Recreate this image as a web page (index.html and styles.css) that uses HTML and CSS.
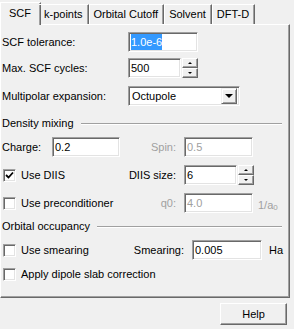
FILE: index.html
```html
<!DOCTYPE html>
<html lang="en">
<head>
    <meta charset="UTF-8">
    <title>SCF settings</title>
    <link rel="stylesheet" href="styles.css">
</head>
<body>
    <div class="dialog">
        <div class="tabs">
            <div class="tab active">SCF</div>
            <div class="tab">k-points</div>
            <div class="tab">Orbital Cutoff</div>
            <div class="tab">Solvent</div>
            <div class="tab">DFT-D</div>
        </div>
        <div class="panel">
            <div class="row first">
                <span class="lbl">SCF tolerance:</span>
                <div class="edit w70"><span class="sel">1.0e-6</span></div>
            </div>
            <div class="row">
                <span class="lbl">Max. SCF cycles:</span>
                <div class="edit w53">500</div>
                <div class="spin"><span class="up"></span><span class="down"></span></div>
            </div>
            <div class="row loose">
                <span class="lbl">Multipolar expansion:</span>
                <div class="edit combo">
                    <span class="combo-text">Octupole</span>
                    <span class="drop"></span>
                </div>
            </div>

            <div class="group">Density mixing</div>
            <div class="row near">
                <span class="lbl short">Charge:</span>
                <div class="edit w68">0.2</div>
                <span class="lbl2 off">Spin:</span>
                <div class="edit w69 off">0.5</div>
            </div>
            <div class="row loose">
                <span class="check-item"><span class="chk on"><svg width="9" height="9" viewBox="0 0 9 9"><polyline points="1,4 3.5,6.5 8,1.5" fill="none" stroke="#000" stroke-width="1.8"/></svg></span>Use DIIS</span>
                <span class="lbl2">DIIS size:</span>
                <div class="edit w53">6</div>
                <div class="spin"><span class="up"></span><span class="down"></span></div>
            </div>
            <div class="row loose">
                <span class="check-item"><span class="chk"></span>Use preconditioner</span>
                <span class="lbl2 off">q0:</span>
                <div class="edit w69 off">4.0</div>
                <span class="unit off">1/a<sub>0</sub></span>
            </div>

            <div class="group tight">Orbital occupancy</div>
            <div class="row near">
                <span class="check-item"><span class="chk"></span>Use smearing</span>
                <span class="lbl2">Smearing:</span>
                <div class="edit w70">0.005</div>
                <span class="unit ha">Ha</span>
            </div>
            <div class="row single">
                <span class="check-item wide"><span class="chk"></span>Apply dipole slab correction</span>
            </div>
        </div>
        <div class="footer">
            <div class="button">Help</div>
        </div>
    </div>
</body>
</html>
```

FILE: styles.css
```css
body {
    margin: 0;
    background-color: #f0f0f0;
    font-family: "Liberation Sans", Arial, sans-serif;
    font-size: 11px;
    color: #000;
}

.dialog {
    width: 294px;
    height: 329px;
}

/* tab strip */
.tabs {
    display: flex;
    align-items: flex-end;
    height: 24px;
    padding-left: 2px;
    position: relative;
    z-index: 1;
}

.tab {
    height: 20px;
    line-height: 18px;
    padding: 0 5px 0 4px;
    box-sizing: border-box;
    border-top: 1px solid #fff;
    border-left: 1px solid #fff;
    border-right: 1px solid #696969;
    box-shadow: inset -1px 0 0 #a0a0a0;
    white-space: nowrap;
}

.tab.active {
    height: 23px;
    line-height: 20px;
    margin: 0 -2px -1px -2px;
    padding: 0 9px 0 8px;
    background-color: #f0f0f0;
}

.tab.active + .tab {
    border-left: none;
    padding-left: 5px;
}

/* page body */
.panel {
    width: 290px;
    height: 274px;
    box-sizing: border-box;
    border: 1px solid;
    border-color: #fff #696969 #696969 #fff;
    box-shadow: inset -1px -1px 0 #a0a0a0;
    padding: 7px 0 0 1px;
}

.row {
    display: flex;
    align-items: center;
    height: 20px;
    margin-top: 6px;
}

.row.first {
    margin-top: 0;
}

.row.loose {
    margin-top: 8px;
}

.row.near {
    margin-top: 7px;
}

.row.single {
    height: 18px;
    margin-top: 5px;
}

.lbl {
    width: 126px;
}

.lbl.short {
    width: 50px;
}

.lbl2 {
    width: 48px;
    margin-right: 8px;
    text-align: right;
    white-space: nowrap;
}

.row.near .lbl2 {
    width: 56px;
}

.off {
    color: #a0a0a0;
}

.unit {
    margin-left: 5px;
    margin-top: 4px;
}

.unit sub {
    font-size: 8px;
    vertical-align: -1px;
}

.unit.ha {
    margin-left: 7px;
    margin-top: 0;
    color: #000;
}

/* edit boxes */
.edit {
    height: 20px;
    box-sizing: border-box;
    background-color: #fff;
    border: 1px solid;
    border-color: #a0a0a0 #fff #fff #a0a0a0;
    box-shadow: inset 1px 1px 0 #696969, inset -1px -1px 0 #e3e3e3;
    padding: 0 2px;
    line-height: 18px;
}

.w53 { width: 53px; }
.w68 { width: 68px; }
.w69 { width: 69px; }
.w70 { width: 70px; }

.sel {
    background-color: #3399ff;
    color: #fff;
    padding: 2px 0;
}

.combo {
    width: 112px;
    display: flex;
    align-items: center;
    padding: 0 2px 0 3px;
}

.combo-text {
    flex: 1;
}

.drop {
    width: 16px;
    height: 16px;
    box-sizing: border-box;
    background-color: #f0f0f0;
    border: 1px solid;
    border-color: #f0f0f0 #696969 #696969 #f0f0f0;
    box-shadow: inset 1px 1px 0 #fff, inset -1px -1px 0 #a0a0a0;
    display: flex;
    align-items: center;
    justify-content: center;
}

.drop::after {
    content: "";
    border-left: 4px solid transparent;
    border-right: 4px solid transparent;
    border-top: 4px solid #000;
}

/* spin buttons */
.spin {
    width: 16px;
    height: 20px;
    margin-left: 1px;
    display: flex;
    flex-direction: column;
}

.spin span {
    flex: 1;
    box-sizing: border-box;
    border: 1px solid;
    border-color: #fff #696969 #696969 #fff;
    box-shadow: inset -1px -1px 0 #a0a0a0;
    display: flex;
    align-items: center;
    justify-content: center;
}

.spin .up::after,
.spin .down::after {
    content: "";
    border-left: 2px solid transparent;
    border-right: 2px solid transparent;
}

.spin .up::after {
    border-bottom: 2px solid #000;
}

.spin .down::after {
    border-top: 2px solid #000;
}

/* check boxes */
.check-item {
    width: 126px;
    display: flex;
    align-items: center;
    white-space: nowrap;
}

.check-item.wide {
    width: auto;
}

.chk {
    flex-shrink: 0;
    width: 13px;
    height: 13px;
    box-sizing: border-box;
    margin: 0 5px 0 1px;
    background-color: #fff;
    border: 1px solid;
    border-color: #a0a0a0 #fff #fff #a0a0a0;
    box-shadow: inset 1px 1px 0 #696969, inset -1px -1px 0 #e3e3e3;
    display: flex;
    align-items: center;
    justify-content: center;
}

/* group headings */
.group {
    display: flex;
    align-items: center;
    height: 14px;
    margin-top: 10px;
}

.group.tight {
    margin-top: 6px;
}

.group::after {
    content: "";
    flex: 1;
    border-top: 1px solid #a0a0a0;
    border-bottom: 1px solid #fff;
    margin: 1px 7px 0 7px;
}

/* footer */
.footer {
    display: flex;
    justify-content: flex-end;
    padding: 5px 7px 0 0;
}

.button {
    width: 67px;
    height: 22px;
    box-sizing: border-box;
    border: 1px solid;
    border-color: #fff #696969 #696969 #fff;
    box-shadow: inset -1px -1px 0 #a0a0a0;
    text-align: center;
    line-height: 20px;
}
```
